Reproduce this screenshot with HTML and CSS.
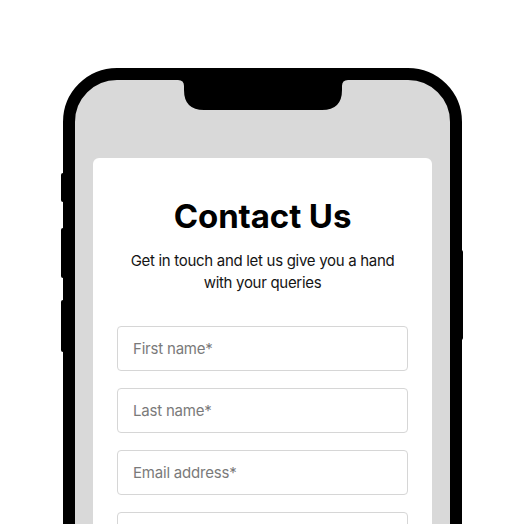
FILE: index.html
```html
<!DOCTYPE html>
<html lang="en">
<head>
<meta charset="utf-8">
<title>Contact Us</title>
<link rel="stylesheet" href="styles.css">
</head>
<body>
<div class="stage">
  <div class="phone">
    <span class="btn btn-l1"></span>
    <span class="btn btn-l2"></span>
    <span class="btn btn-l3"></span>
    <span class="btn btn-r1"></span>
    <svg class="notch" width="170" height="30" viewBox="0 0 170 30" aria-hidden="true">
      <path d="M0 0 H170 Q164 0 164 6 V10 Q164 30 144 30 H26 Q6 30 6 10 V6 Q6 0 0 0 Z" fill="#000"/>
    </svg>
    <div class="card">
      <h1 class="title">Contact Us</h1>
      <p class="subtitle">Get in touch and let us give you a hand<br>with your queries</p>
      <form class="form">
        <input class="field" type="text" placeholder="First name*">
        <input class="field" type="text" placeholder="Last name*">
        <input class="field" type="email" placeholder="Email address*">
        <input class="field" type="text" placeholder="Phone number">
      </form>
    </div>
  </div>
</div>
</body>
</html>
```

FILE: styles.css
```css
html, body {
  margin: 0;
  padding: 0;
  background: #ffffff;
  overflow: hidden;
  height: 100%;
}

body {
  font-family: Inter, "Noto Sans", sans-serif;
}

.stage {
  display: flex;
  justify-content: center;
  padding-top: 68px;
}

.phone {
  position: relative;
  width: 375px;
  height: 640px;
  border: 12px solid #000;
  border-radius: 54px;
  background: #d9d9d9;
  flex-shrink: 0;
  margin-left: 1px;
}

.btn {
  position: absolute;
  width: 6px;
  background: #000;
  border-radius: 2px;
}

.btn-l1 { left: -14px; top: 93px; height: 29px; }
.btn-l2 { left: -14px; top: 148px; height: 50px; }
.btn-l3 { left: -14px; top: 220px; height: 52px; }
.btn-r1 { right: -13px; top: 170px; height: 90px; }

.notch {
  position: absolute;
  top: 0;
  left: 103px;
  display: block;
}

.card {
  margin: 78px 18px 0;
  background: #ffffff;
  border-radius: 6px;
  height: 520px;
  padding: 38px 24px 0;
  text-align: center;
}

.title {
  margin: 0;
  font-size: 33px;
  line-height: 40px;
  font-weight: 700;
  color: #000;
  letter-spacing: -0.1px;
}

.subtitle {
  margin: 14px 0 0;
  font-size: 15px;
  line-height: 22px;
  color: #141414;
  letter-spacing: -0.3px;
}

.form {
  margin-top: 32px;
  display: flex;
  flex-direction: column;
  gap: 17px;
}

.field {
  box-sizing: border-box;
  width: 100%;
  height: 45px;
  margin: 0;
  padding: 0 15px;
  border: 1px solid #d6d6d6;
  border-radius: 4px;
  font-family: Inter, "Noto Sans", sans-serif;
  font-size: 15px;
  letter-spacing: -0.2px;
  color: #222;
  background: #fff;
  outline: none;
}

.field::placeholder {
  color: #7a7a7a;
  opacity: 1;
}
```
